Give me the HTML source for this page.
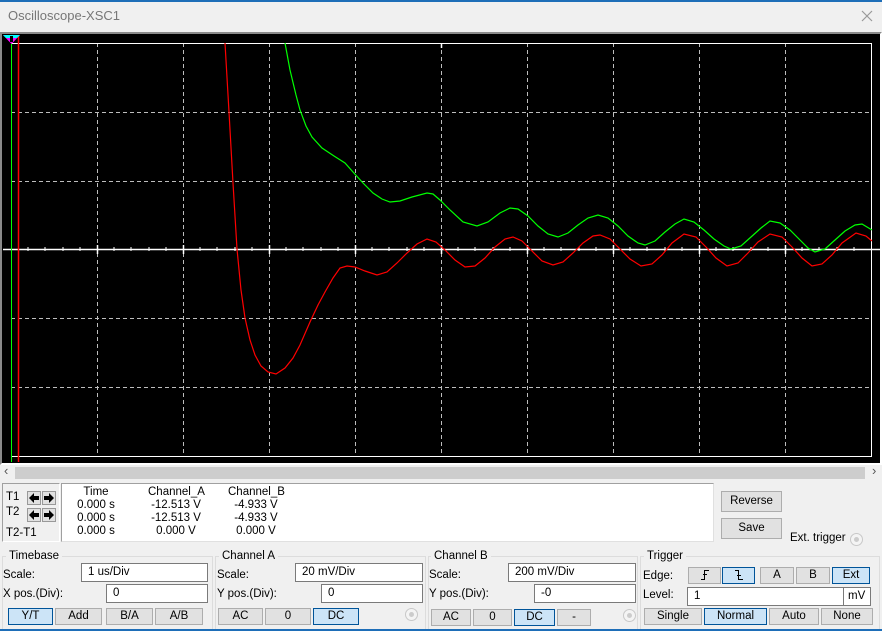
<!DOCTYPE html>
<html><head><meta charset="utf-8"><style>
*{margin:0;padding:0;box-sizing:border-box}
body{width:882px;height:631px;background:#f0f0f0;font-family:"Liberation Sans",sans-serif;font-size:11.5px;color:#000;position:relative;overflow:hidden}
.a{position:absolute}
.in{position:absolute;background:#fff;border:1px solid #7a7a7a;padding:2px 0 0 6px;font-size:11.5px;height:19px}
.b{position:absolute;background:#e1e1e1;border:1px solid #adadad;text-align:center;font-size:11.5px;line-height:15px;height:17px}
.s{background:#cce4f7;border-color:#005499}
.g{position:absolute;border:1px solid #dcdcdc}
.gt{position:absolute;background:#f0f0f0;padding:0 3px;font-size:11.5px}
.r{position:absolute;width:13px;height:13px;border-radius:50%;border:1px solid #c8c8c8;background:#f4f4f4}
.r:after{content:"";position:absolute;left:3px;top:3px;width:5px;height:5px;border-radius:50%;background:#ccc}
.ar{position:absolute;width:14px;height:14px;background:#e1e1e1;border:1px solid #999}
</style></head><body>
<div class="a" style="left:0;top:0;width:882px;height:2px;background:#1e6eb8"></div>
<div class="a" style="left:8px;top:8px;font-size:13px;color:#777">Oscilloscope-XSC1</div>
<svg class="a" style="left:861px;top:10px" width="12" height="12"><path d="M1 1L11 11M11 1L1 11" stroke="#999" stroke-width="1.2"/></svg>
<div class="a" style="left:0;top:32px;width:882px;height:433px;background:#000;border:2px solid #8a8a8a;border-bottom-color:#fff;border-right-color:#fff"></div>
<svg class="a" style="left:0;top:0" width="882" height="470">
<g stroke="#bdbdbd" stroke-width="1" stroke-dasharray="4,3">
<line x1="97.5" y1="43" x2="97.5" y2="457"/><line x1="183.5" y1="43" x2="183.5" y2="457"/><line x1="269.5" y1="43" x2="269.5" y2="457"/><line x1="355.5" y1="43" x2="355.5" y2="457"/><line x1="441.5" y1="43" x2="441.5" y2="457"/><line x1="527.5" y1="43" x2="527.5" y2="457"/><line x1="613.5" y1="43" x2="613.5" y2="457"/><line x1="699.5" y1="43" x2="699.5" y2="457"/><line x1="785.5" y1="43" x2="785.5" y2="457"/>
<line x1="11" y1="112.5" x2="872" y2="112.5"/><line x1="11" y1="181.5" x2="872" y2="181.5"/><line x1="11" y1="318.5" x2="872" y2="318.5"/><line x1="11" y1="387.5" x2="872" y2="387.5"/>
</g>
<rect x="11.5" y="43.5" width="860" height="413" fill="none" stroke="#fff"/>
<line x1="3" y1="249.5" x2="880" y2="249.5" stroke="#fff" stroke-width="1.5"/>
<g stroke="#fff"><path d="M28 247v4M45 247v4M63 247v4M80 247v4M114 247v4M131 247v4M149 247v4M166 247v4M200 247v4M217 247v4M235 247v4M252 247v4M286 247v4M303 247v4M321 247v4M338 247v4M372 247v4M389 247v4M407 247v4M424 247v4M458 247v4M475 247v4M493 247v4M510 247v4M544 247v4M561 247v4M579 247v4M596 247v4M630 247v4M647 247v4M665 247v4M682 247v4M716 247v4M733 247v4M751 247v4M768 247v4M802 247v4M819 247v4M837 247v4M854 247v4"/>
<path d="M97.5 245v9M183.5 245v9M269.5 245v9M355.5 245v9M441.5 245v9M527.5 245v9M613.5 245v9M699.5 245v9M785.5 245v9M441.5 43v5" stroke-width="1.5"/></g>
<line x1="11.5" y1="36" x2="11.5" y2="462" stroke="#0f0"/>
<line x1="18.5" y1="36" x2="18.5" y2="462" stroke="#f00" stroke-width="1.5"/>
<polygon points="3,35 20,35 11.5,44" fill="#f0f"/><polygon points="3,35 20,35 17,38 6,38" fill="#0ff"/><rect x="10" y="36" width="3" height="6" fill="#000"/>
<polyline fill="none" stroke="#f00" stroke-width="1.2" points="225,43 229,112 233,183 237,249 241,290 245,318 250,340 255,355 261,366 268,372 276,374 285,368 293,358 300,345 310,322 318,305 325,292 333,278 340,268 347,266 355,267 365,271 377,275 387,272 397,263 407,253 417,244 427,239 436,242 445,250 455,260 465,267 475,266 485,258 495,247 505,239 513,237 522,241 532,251 542,261 553,265 563,262 573,253 583,243 593,236 600,235 610,239 620,249 630,259 641,266 652,264 662,255 672,243 684,234 696,237 706,247 716,258 727,266 738,263 748,253 758,242 770,234 782,237 792,247 802,258 812,266 822,264 832,255 842,243 856,233 866,236 872,241"/>
<polyline fill="none" stroke="#0f0" stroke-width="1.2" points="285,43 290,70 296,95 300,110 306,126 312,137 322,148 334,156 345,163 353,172 363,183 373,193 382,199 390,202 400,201 412,197 427,193 433,194 440,200 450,210 463,222 477,226 488,222 500,213 510,208 518,209 528,216 538,226 548,234 558,237 568,233 578,225 588,218 598,215 608,218 618,226 628,236 638,243 645,245 655,241 665,232 675,224 684,219 694,222 704,230 714,239 724,246 731,249 741,246 751,237 761,228 770,221 780,223 790,230 800,240 808,248 815,252 825,249 835,240 845,231 855,225 862,224 872,230"/>
</svg>
<div class="a" style="left:15px;top:467px;width:850px;height:12px;background:#cdcdcd"></div>
<div class="a" style="left:4px;top:463px;font-size:13px;color:#555">‹</div>
<div class="a" style="left:872px;top:463px;font-size:13px;color:#555">›</div>
<div class="a" style="left:2px;top:483px;width:58px;height:59px;border:1px solid #a0a0a0;border-right-color:#fff;border-bottom-color:#fff"></div>
<div class="a" style="left:6px;top:491px">T1</div><div class="a" style="left:6px;top:506px">T2</div><div class="a" style="left:6px;top:527px">T2-T1</div>
<div class="ar" style="left:27px;top:491px"><svg width="12" height="12"><path d="M1 6L6 1V4H11V8H6V11Z"/></svg></div>
<div class="ar" style="left:42px;top:491px"><svg width="12" height="12"><path d="M11 6L6 1V4H1V8H6V11Z"/></svg></div>
<div class="ar" style="left:27px;top:508px"><svg width="12" height="12"><path d="M1 6L6 1V4H11V8H6V11Z"/></svg></div>
<div class="ar" style="left:42px;top:508px"><svg width="12" height="12"><path d="M11 6L6 1V4H1V8H6V11Z"/></svg></div>
<div class="a" style="left:61px;top:483px;width:653px;height:59px;background:#fff;border:1px solid #a0a0a0;border-right-color:#e0e0e0;border-bottom-color:#e0e0e0"></div>
<div class="a" style="left:76px;top:486px;line-height:13px;text-align:center;width:40px">Time<br>0.000 s<br>0.000 s<br>0.000 s</div>
<div class="a" style="left:148px;top:486px;line-height:13px;text-align:center;width:56px">Channel_A<br>-12.513 V<br>-12.513 V<br>0.000 V</div>
<div class="a" style="left:228px;top:486px;line-height:13px;text-align:center;width:56px">Channel_B<br>-4.933 V<br>-4.933 V<br>0.000 V</div>
<div class="b" style="left:721px;top:491px;width:61px;height:21px;line-height:19px">Reverse</div>
<div class="b" style="left:721px;top:518px;width:61px;height:21px;line-height:19px">Save</div>
<div class="a" style="left:790px;top:532px">Ext. trigger</div><div class="r" style="left:850px;top:533px"></div>
<div class="g" style="left:2px;top:556px;width:211px;height:74px"></div><div class="gt" style="left:6px;top:550px">Timebase</div>
<div class="a" style="left:3px;top:569px">Scale:</div><div class="in" style="left:81px;top:563px;width:127px">1 us/Div</div>
<div class="a" style="left:3px;top:588px">X pos.(Div):</div><div class="in" style="left:106px;top:584px;width:102px">0</div>
<div class="b s" style="left:8px;top:608px;width:45px">Y/T</div><div class="b" style="left:55px;top:608px;width:47px">Add</div><div class="b" style="left:106px;top:608px;width:47px">B/A</div><div class="b" style="left:155px;top:608px;width:48px">A/B</div>
<div class="g" style="left:215px;top:556px;width:211px;height:74px"></div><div class="gt" style="left:219px;top:550px">Channel A</div>
<div class="a" style="left:217px;top:569px">Scale:</div><div class="in" style="left:295px;top:563px;width:128px">20 mV/Div</div>
<div class="a" style="left:217px;top:588px">Y pos.(Div):</div><div class="in" style="left:321px;top:584px;width:102px">0</div>
<div class="b" style="left:218px;top:608px;width:45px">AC</div><div class="b" style="left:265px;top:608px;width:46px">0</div><div class="b s" style="left:313px;top:608px;width:46px">DC</div><div class="r" style="left:405px;top:608px"></div>
<div class="g" style="left:428px;top:556px;width:210px;height:74px"></div><div class="gt" style="left:431px;top:550px">Channel B</div>
<div class="a" style="left:429px;top:569px">Scale:</div><div class="in" style="left:508px;top:563px;width:128px">200 mV/Div</div>
<div class="a" style="left:429px;top:588px">Y pos.(Div):</div><div class="in" style="left:534px;top:584px;width:102px">-0</div>
<div class="b" style="left:431px;top:609px;width:40px">AC</div><div class="b" style="left:473px;top:609px;width:39px">0</div><div class="b s" style="left:514px;top:609px;width:41px">DC</div><div class="b" style="left:557px;top:609px;width:34px">-</div><div class="r" style="left:623px;top:609px"></div>
<div class="g" style="left:640px;top:556px;width:240px;height:74px"></div><div class="gt" style="left:644px;top:550px">Trigger</div>
<div class="a" style="left:643px;top:570px">Edge:</div>
<div class="b" style="left:688px;top:567px;width:33px"><svg width="12" height="12" style="margin-top:1px"><path d="M2 10.5H5.5V1.5H10M4 5.5H8" stroke="#000" fill="none"/></svg></div>
<div class="b s" style="left:722px;top:567px;width:33px"><svg width="12" height="12" style="margin-top:1px"><path d="M2 1.5H5.5V10.5H10M4 6.5H8" stroke="#000" fill="none"/></svg></div>
<div class="b" style="left:760px;top:567px;width:34px">A</div><div class="b" style="left:796px;top:567px;width:34px">B</div><div class="b s" style="left:832px;top:567px;width:38px">Ext</div>
<div class="a" style="left:643px;top:589px">Level:</div><div class="in" style="left:687px;top:587px;width:157px">1</div><div class="in" style="left:843px;top:587px;width:28px;padding-left:4px">mV</div>
<div class="b" style="left:644px;top:608px;width:58px">Single</div><div class="b s" style="left:704px;top:608px;width:63px">Normal</div><div class="b" style="left:769px;top:608px;width:50px">Auto</div><div class="b" style="left:821px;top:608px;width:52px">None</div>
<div class="a" style="left:0;top:629px;width:882px;height:2px;background:#1e6eb8"></div>
</body></html>
